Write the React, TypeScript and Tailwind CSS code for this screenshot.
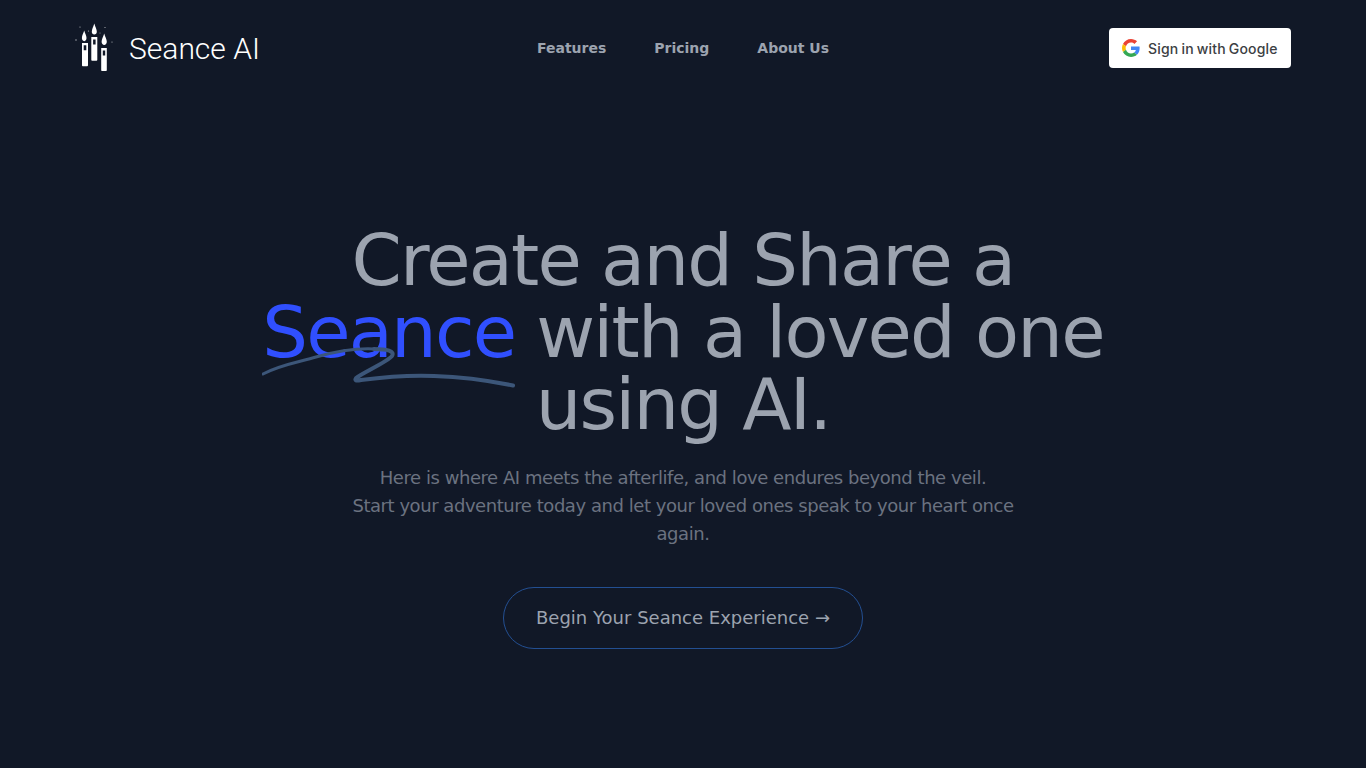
export default function App() {
  return (
    <div className="min-h-screen bg-[#111827] font-['DejaVu_Sans',sans-serif]">
      <header className="mx-auto grid h-24 max-w-7xl grid-cols-[1fr_auto_1fr] items-center px-8">
        <a className="flex items-center gap-[15px] -ml-[3px]">
          <svg width="42" height="50" viewBox="72 23 42 50" fill="white" aria-hidden="true">
            <path d="M84.200 30.500c-1 3.200-2.300 5.200-2.300 7.600 0 1.800 1 3.100 2.300 3.100s2.300-1.300 2.300-3.100c0-2.400-1.400-4.400-2.300-7.600z" />
            <path d="M94.300 23.500c-1.100 3.600-2.500 5.800-2.500 8.200 0 1.700 1.100 2.800 2.500 2.800s2.500-1.100 2.500-2.800c0-2.400-1.500-4.600-2.500-8.200z" />
            <path d="M104.200 33.500c-1.100 3.600-2.600 5.800-2.600 8.300 0 1.900 1.200 3.300 2.600 3.300s2.600-1.400 2.600-3.300c0-2.500-1.600-4.700-2.600-8.300z" />
            <path fillRule="evenodd" d="M82 43h6v22.200c0 .7-.6 1-1 1h-4c-.5 0-1-.4-1-1V43zm1.700 2.200v5h2.600v-5h-2.600z" />
            <path fillRule="evenodd" d="M91.300 37h6v22.700c0 .7-.5 1.100-1 1.100h-4c-.5 0-1-.4-1-1.100V37zm1.800 2.500v5h2.500v-5h-2.500z" />
            <path fillRule="evenodd" d="M101.200 48h5.600v22c0 .6-.4 1-1 1h-3.600c-.6 0-1-.4-1-1V48zm1.600 2.500v5h2.400v-5h-2.400z" />
            <circle cx="80" cy="27" r=".6" opacity=".7" />
            <circle cx="88.500" cy="31" r=".6" opacity=".7" />
            <circle cx="105" cy="27.500" r=".6" opacity=".7" />
            <circle cx="76" cy="40" r=".7" opacity=".7" />
            <circle cx="112" cy="42" r=".6" opacity=".7" />
            <circle cx="100" cy="33" r=".5" opacity=".6" />
          </svg>
          <span className="mt-[1px] font-['Roboto',sans-serif] text-[30px] font-light leading-none text-white">Seance AI</span>
        </a>
        <nav className="flex gap-12 text-sm font-semibold text-[#9ca3af]">
          <a>Features</a>
          <a>Pricing</a>
          <a>About Us</a>
        </nav>
        <button className="flex h-10 w-[182px] items-center gap-2 justify-self-end rounded bg-white pl-[13px] font-['Inter',sans-serif] text-[14px] font-medium tracking-[0.2px] text-[#3c4043] [word-spacing:-1px]">
          <svg width="18" height="18" viewBox="0 0 48 48" aria-hidden="true">
            <path fill="#EA4335" d="M24 9.500c3.500 0 6.700 1.200 9.200 3.600l6.900-6.900C35.900 2.400 30.500 0 24 0 14.600 0 6.500 5.400 2.600 13.200l8 6.200C12.500 13.600 17.800 9.500 24 9.500z" />
            <path fill="#4285F4" d="M47 24.500c0-1.600-.1-3.100-.4-4.500H24v9h13c-.6 3-2.300 5.500-4.800 7.200l7.700 6c4.500-4.200 7.100-10.300 7.100-17.700z" />
            <path fill="#FBBC05" d="M10.500 28.600c-.5-1.400-.8-3-.8-4.600s.3-3.200.8-4.600l-8-6.200C.9 16.500 0 20.100 0 24s.9 7.500 2.600 10.800l7.900-6.200z" />
            <path fill="#34A853" d="M24 48c6.500 0 11.900-2.100 15.900-5.800l-7.700-6c-2.100 1.500-4.900 2.300-8.200 2.300-6.200 0-11.500-4.100-13.400-9.900l-8 6.200C6.500 42.600 14.600 48 24 48z" />
          </svg>
          <span>Sign in with Google</span>
        </button>
      </header>
      <main className="flex flex-col items-center pt-[128px] text-center">
        <h1 className="max-w-[900px] text-7xl tracking-tight text-[#9ca3af]">
          Create and Share a{" "}
          <span className="relative text-[#304ffe]">
            Seance
            <svg
              className="absolute left-0 top-[50px] h-[50px] w-[254px]"
              viewBox="263 340 254 50"
              fill="none"
              aria-hidden="true"
            >
              <path
                d="M264 374C280 365 300 362 317 357C335 352 355 348 375 349"
                stroke="#3c5679"
                strokeWidth="3"
                strokeLinecap="round"
              />
              <path
                d="M375 349C388 349 396 351 393 356C388 362 365 372 357 378C355 381 358 381 362 380C385 377 410 375 435 376C465 377 492 381 514 385.500"
                stroke="#3c5679"
                strokeWidth="4"
                strokeLinecap="round"
                strokeLinejoin="round"
              />
            </svg>
          </span>{" "}
          with a loved one using AI.
        </h1>
        <p className="mt-6 max-w-2xl text-lg tracking-tight text-[#6b7280]">
          Here is where AI meets the afterlife, and love endures beyond the veil.
          <br />
          Start your adventure today and let your loved ones speak to your heart once again.
        </p>
        <button className="mt-[39px] h-[62px] w-[360px] rounded-full border border-[#234f92] text-lg text-[#9ca3af]">
          Begin Your Seance Experience →
        </button>
      </main>
    </div>
  );
}
